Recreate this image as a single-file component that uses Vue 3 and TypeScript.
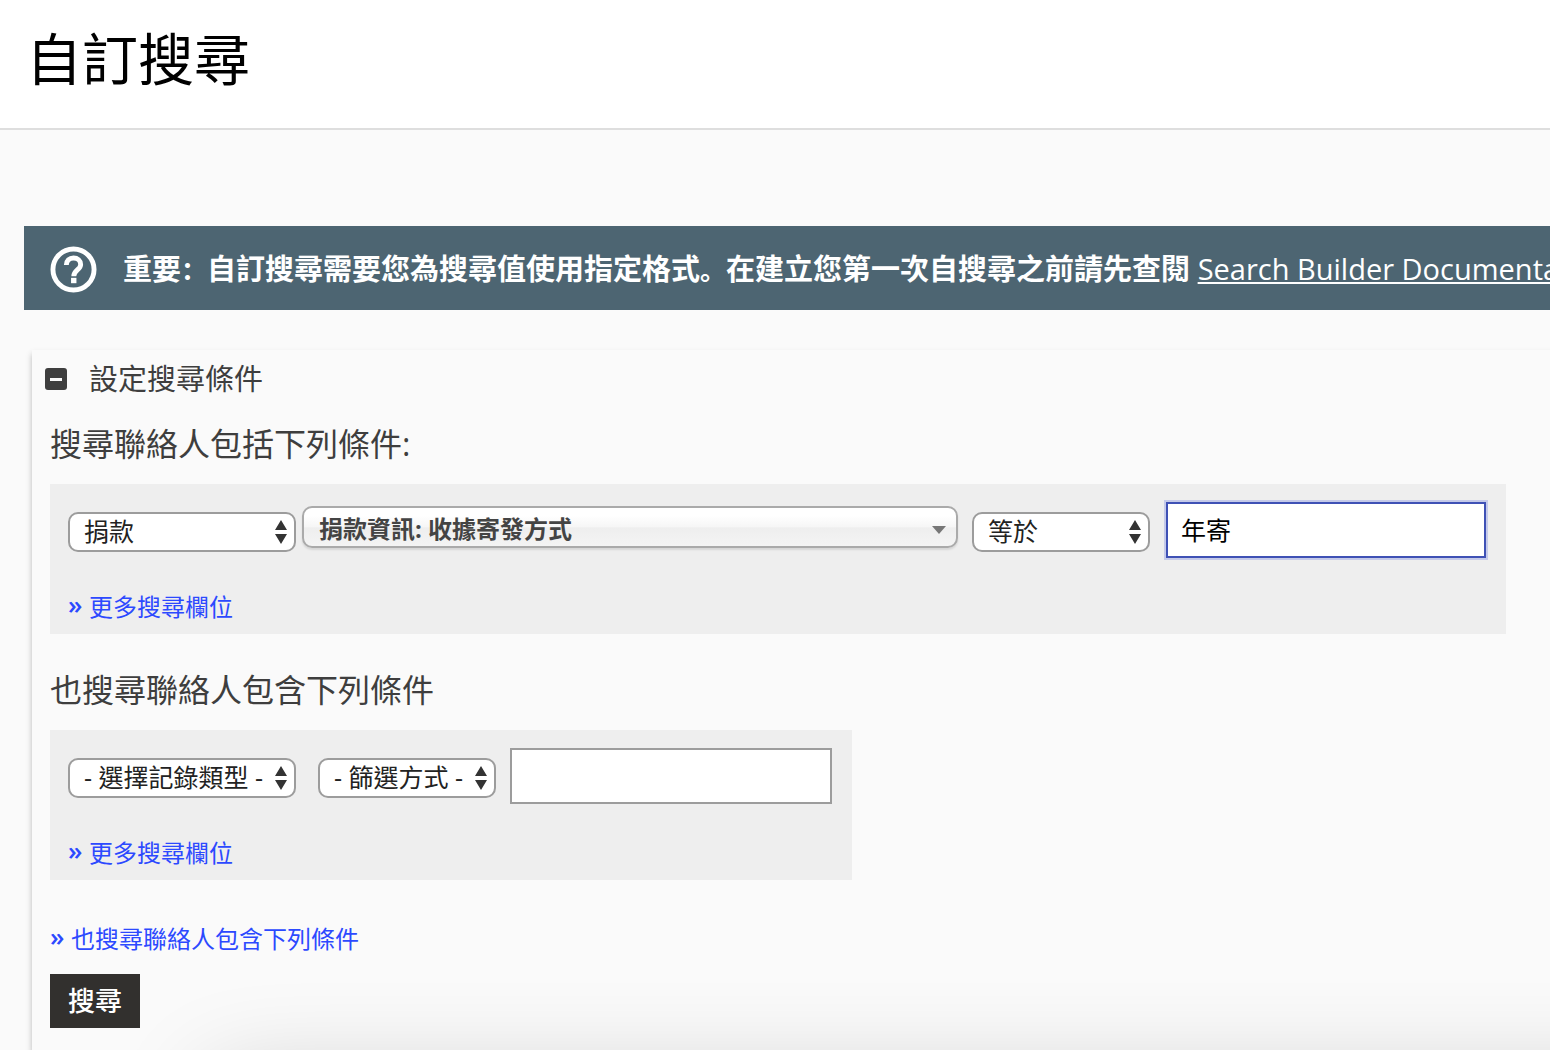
<script setup lang="ts">
import { ref } from 'vue'

const recordType = ref('捐款')
const field = ref('捐款資訊: 收據寄發方式')
const operator = ref('等於')
const value = ref('年寄')
const emptyRecordType = ref('- 選擇記錄類型 -')
const emptyOperator = ref('- 篩選方式 -')
const emptyValue = ref('')
const expanded = ref(true)
</script>

<template>
  <div class="page">
    <header class="page-header">
      <h1>自訂搜尋</h1>
    </header>

    <main>
      <div class="notice">
        <svg class="notice-icon" viewBox="0 0 48 48" aria-hidden="true">
          <circle cx="24" cy="24" r="21" fill="none" stroke="#fff" stroke-width="5" />
          <path d="M16.7 19.5C16.7 14.8 19.8 12.2 24 12.2s7.3 2.8 7.3 6.6c0 5.4-7 6-7 12" fill="none" stroke="#fff" stroke-width="5" />
          <rect x="21.5" y="32.5" width="5.5" height="5.5" fill="#fff" />
        </svg>
        <p><strong>重要<span class="mark">：</span>自訂搜尋需要您為搜尋值使用指定格式<span class="mark">。</span>在建立您第一次自搜尋之前請先查閱</strong> <a href="#docs">Search Builder Documentation</a></p>
      </div>

      <section class="panel">
        <button class="panel-toggle" type="button" :aria-expanded="expanded" @click="expanded = !expanded">
          <svg width="22" height="22" viewBox="0 0 22 22" aria-hidden="true">
            <rect width="22" height="22" rx="3" fill="#3e3e3e" />
            <rect x="5" y="10" width="12" height="3" fill="#fafafa" />
          </svg>
          <span>設定搜尋條件</span>
        </button>

        <form v-show="expanded" class="criteria" @submit.prevent>
          <h2>搜尋聯絡人包括下列條件:</h2>
          <div class="block">
            <div class="row">
              <div class="select wide">
                <select v-model="recordType" aria-label="記錄類型">
                  <option>捐款</option>
                </select>
                <svg width="12" height="24" viewBox="0 0 12 24" aria-hidden="true"><path d="M6 0l6 10H0zM6 24l6-10H0z" fill="#333" /></svg>
              </div>
              <div class="select field">
                <select v-model="field" aria-label="欄位">
                  <option>捐款資訊: 收據寄發方式</option>
                </select>
                <svg width="14" height="8" viewBox="0 0 14 8" aria-hidden="true"><path d="M0 0h14L7 8z" fill="#777" /></svg>
              </div>
              <div class="select narrow">
                <select v-model="operator" aria-label="篩選方式">
                  <option>等於</option>
                </select>
                <svg width="12" height="24" viewBox="0 0 12 24" aria-hidden="true"><path d="M6 0l6 10H0zM6 24l6-10H0z" fill="#333" /></svg>
              </div>
              <input v-model="value" class="active" type="text" aria-label="搜尋值" />
            </div>
            <a class="more" href="#more"><span>»</span>更多搜尋欄位</a>
          </div>

          <h2>也搜尋聯絡人包含下列條件</h2>
          <div class="block">
            <div class="row">
              <div class="select wide">
                <select v-model="emptyRecordType" aria-label="記錄類型">
                  <option>- 選擇記錄類型 -</option>
                </select>
                <svg width="12" height="24" viewBox="0 0 12 24" aria-hidden="true"><path d="M6 0l6 10H0zM6 24l6-10H0z" fill="#333" /></svg>
              </div>
              <div class="select narrow spaced">
                <select v-model="emptyOperator" aria-label="篩選方式">
                  <option>- 篩選方式 -</option>
                </select>
                <svg width="12" height="24" viewBox="0 0 12 24" aria-hidden="true"><path d="M6 0l6 10H0zM6 24l6-10H0z" fill="#333" /></svg>
              </div>
              <input v-model="emptyValue" type="text" aria-label="搜尋值" />
            </div>
            <a class="more" href="#more"><span>»</span>更多搜尋欄位</a>
          </div>

          <a class="more another" href="#another"><span>»</span>也搜尋聯絡人包含下列條件</a>
          <button class="submit" type="submit">搜尋</button>
        </form>
      </section>
    </main>
    <div class="shade"></div>
  </div>
</template>

<style>
body {
  margin: 0;
  background: #fafafa;
  overflow-x: hidden;
}
</style>

<style scoped>
.page {
  min-height: 100vh;
  overflow: hidden;
  box-sizing: border-box;
  color: #3e3e3e;
  font-family: "Open Sans", "Noto Sans CJK TC", sans-serif;
}

.page * {
  box-sizing: border-box;
}

.page-header {
  padding: 18px 26px 30px;
  background: #fff;
  border-bottom: 2px solid #dedede;
}

h1 {
  margin: 0;
  color: #000;
  font-size: 56px;
  font-weight: 400;
  line-height: 80px;
}

main {
  padding: 96px 0 0 24px;
}

.notice {
  display: flex;
  align-items: center;
  gap: 26px;
  height: 84px;
  padding: 2px 26px 0;
  overflow: hidden;
  background: #4d6572;
  color: #fff;
  font-size: 29px;
  line-height: 40px;
  white-space: nowrap;
}

.notice-icon {
  flex: none;
  width: 47px;
  height: 47px;
}

.notice p {
  margin: 0;
}

.notice .mark {
  font-family: "Noto Sans CJK SC", sans-serif;
  font-size: 26px;
}

.notice a {
  color: #fff;
  text-decoration-thickness: 2px;
  text-underline-offset: 2px;
  text-decoration-skip-ink: none;
}

.panel {
  margin: 40px -8px 0 8px;
  padding-bottom: 22px;
  box-shadow: 0 4px 6px rgba(0, 0, 0, 0.26);
  background: #fafafa;
}

.panel-toggle {
  display: flex;
  align-items: center;
  gap: 22px;
  padding: 9px 13px;
  border: 0;
  background: none;
  color: inherit;
  font-family: inherit;
  font-size: 29px;
  line-height: 40px;
}

.criteria {
  display: flex;
  flex-direction: column;
  align-items: flex-start;
  padding: 0 18px;
}

h2 {
  margin: 12px 0 16px;
  font-size: 32px;
  font-weight: 400;
  line-height: 48px;
}

.block {
  margin-bottom: 20px;
  padding: 18px 20px 9px 18px;
  background: #eee;
}

.row {
  display: flex;
  align-items: flex-start;
}

.select {
  position: relative;
  margin-top: 10px;
}

.select svg {
  position: absolute;
  top: 8px;
  right: 9px;
  pointer-events: none;
}

select {
  appearance: none;
  width: 100%;
  height: 40px;
  padding: 0 14px 3px;
  border: 2px solid #9c9c9c;
  border-radius: 10px;
  background: #fff;
  color: #222;
  font-family: inherit;
  font-size: 25px;
}

.wide {
  width: 228px;
}

.narrow {
  width: 178px;
  margin-right: 16px;
}

.spaced {
  margin-left: 22px;
  margin-right: 14px;
}

.field {
  width: 656px;
  margin: 4px 14px 0 6px;
}

.field select {
  height: 42px;
  padding: 3px 15px 0;
  border-color: #aaa;
  background: linear-gradient(#fff 20%, #f6f6f6 50%, #eee 52%, #f4f4f4 100%);
  box-shadow: 0 2px 2px rgba(0, 0, 0, 0.1);
  color: #444;
  font-size: 24px;
  font-weight: 700;
}

.field svg {
  top: 20px;
  right: 12px;
}

input {
  width: 322px;
  height: 56px;
  padding: 0 14px 2px;
  border: 2px solid #9c9c9c;
  outline: 0;
  background: #fff;
  color: #000;
  font-family: inherit;
  font-size: 25px;
}

.active {
  width: 320px;
  padding-left: 13px;
  border-color: #3f51b5;
  box-shadow: 0 0 0 2px #c5cae9;
}

.more {
  display: flex;
  width: fit-content;
  height: 36px;
  margin-top: 31px;
  color: #2c49ff;
  font-size: 24px;
  line-height: 36px;
  text-decoration: none;
}

.more span {
  width: 21px;
  font-size: 26px;
  font-weight: 600;
  line-height: 30px;
}

.another {
  margin-top: 21px;
}

.submit {
  margin-top: 17px;
  padding: 7px 18px;
  border: 0;
  background: #32302e;
  color: #fff;
  font-family: inherit;
  font-size: 27px;
  font-weight: 500;
  line-height: 40px;
}

.shade {
  position: fixed;
  right: -200px;
  bottom: -130px;
  left: 210px;
  height: 100px;
  box-shadow: 0 0 100px rgba(0, 0, 0, 0.2);
  pointer-events: none;
}
</style>
